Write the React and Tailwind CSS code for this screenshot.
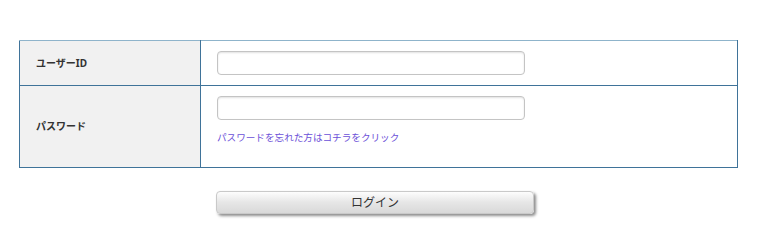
import React, { useState } from 'react';

export default function App() {
  const [userId, setUserId] = useState('');
  const [password, setPassword] = useState('');

  return (
    <div className="min-h-[240px] bg-white pt-[40px] pl-[19px] text-[#333]" style={{ fontFamily: '"Noto Sans", "Noto Sans CJK JP", sans-serif' }}>
      <table className="w-[719px] border-collapse">
        <tbody>
          <tr className="h-[45px]">
            <th className="w-[181px] border border-[#3f7399] border-t-[#8fb4cb] bg-[#f1f1f1] pl-[16px] text-left align-middle text-[10px] font-bold">
              ユーザーID
            </th>
            <td className="border border-[#3f7399] border-t-[#8fb4cb] pl-[16px] align-middle">
              <input
                className="block h-[24px] w-[308px] rounded-[4px] border border-[#c4c4c4] bg-white px-2 text-[12px] shadow-[inset_0_1px_2px_rgba(0,0,0,0.12)] outline-none"
                value={userId}
                onChange={e => setUserId(e.target.value)}
              />
            </td>
          </tr>
          <tr className="h-[82px]">
            <th className="border border-[#3f7399] bg-[#f1f1f1] pl-[16px] text-left align-middle text-[10px] font-bold">
              パスワード
            </th>
            <td className="border border-[#3f7399] pl-[16px] pt-[10px] align-top">
              <input
                type="password"
                className="block h-[24px] w-[308px] rounded-[4px] border border-[#c4c4c4] bg-white px-2 text-[12px] shadow-[inset_0_1px_2px_rgba(0,0,0,0.12)] outline-none"
                value={password}
                onChange={e => setPassword(e.target.value)}
              />
              <a href="#" className="mt-[11px] block text-[9.6px] leading-[14px] text-[#6b4fd8]">
                パスワードを忘れた方はコチラをクリック
              </a>
            </td>
          </tr>
        </tbody>
      </table>

      <div className="pl-[197px] pt-[21px]">
        <button className="h-[23px] w-[318px] rounded-[4px] border border-[#c9c9c9] bg-gradient-to-b from-[#fdfdfd] via-[#e6e6e6] to-[#d9d9d9] text-[12px] leading-[21px] text-[#333] shadow-[2px_2px_3px_rgba(0,0,0,0.45)]">
          ログイン
        </button>
      </div>
    </div>
  );
}
